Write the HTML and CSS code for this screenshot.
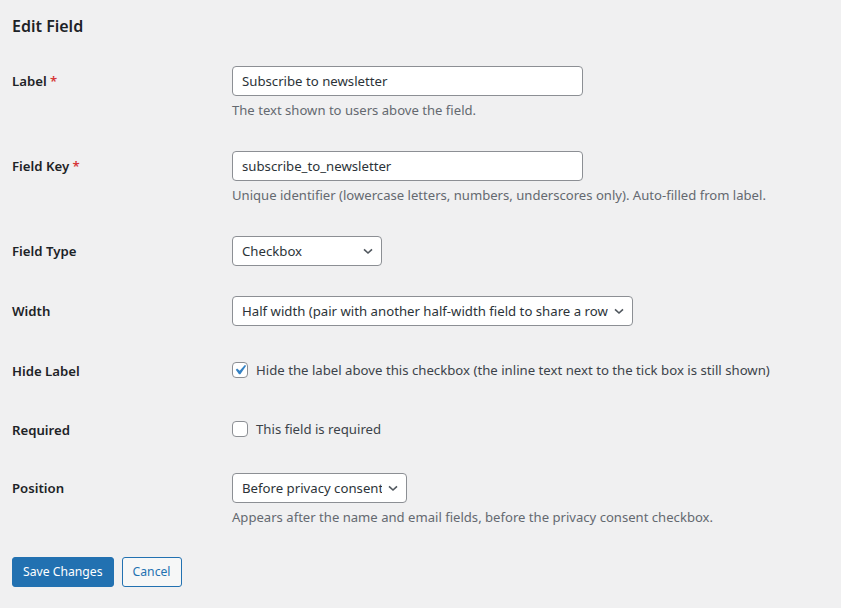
FILE: index.html
```html
<!DOCTYPE html>
<html lang="en">
<head>
  <meta charset="UTF-8">
  <title>Edit Field</title>
  <link rel="stylesheet" href="styles.css">
</head>
<body>

  <div class="wrap">
    <h2 class="title">Edit Field</h2>

    <form id="editFieldForm">
      <table class="form-table">
        <tbody>
          <!-- label + key -->
          <tr>
            <th><label for="fieldLabel">Label <span class="required">*</span></label></th>
            <td>
              <input id="fieldLabel" class="regular-text" type="text" value="Subscribe to newsletter">
              <p class="description">The text shown to users above the field.</p>
            </td>
          </tr>
          <tr>
            <th><label for="fieldKey">Field Key <span class="required">*</span></label></th>
            <td>
              <input id="fieldKey" class="regular-text" type="text" value="subscribe_to_newsletter">
              <p class="description">Unique identifier (lowercase letters, numbers, underscores only). Auto-filled from label.</p>
            </td>
          </tr>

          <!-- selects -->
          <tr>
            <th><label for="fieldType">Field Type</label></th>
            <td>
              <span class="select-wrap">
                <select id="fieldType" class="select-type">
                  <option>Checkbox</option>
                  <option>Text</option>
                  <option>Textarea</option>
                  <option>Dropdown</option>
                </select>
                <svg class="chevron" viewBox="0 0 16 16"><path d="M4 6.3l4 3.7 4-3.7"/></svg>
              </span>
            </td>
          </tr>
          <tr>
            <th><label for="fieldWidth">Width</label></th>
            <td>
              <span class="select-wrap">
                <select id="fieldWidth" class="select-width">
                  <option>Half width (pair with another half-width field to share a row)</option>
                  <option>Full width</option>
                </select>
                <svg class="chevron" viewBox="0 0 16 16"><path d="M4 6.3l4 3.7 4-3.7"/></svg>
              </span>
            </td>
          </tr>

          <!-- checkboxes -->
          <tr>
            <th>Hide Label</th>
            <td class="check-cell">
              <label class="check">
                <span class="box">
                  <input type="checkbox" name="hideLabel" checked>
                  <svg class="tick" viewBox="0 0 20 20"><path d="M14.83 4.89l1.34.94-5.81 8.38H9.02L5.78 9.67l1.34-1.25 2.57 2.4z"/></svg>
                </span>
                Hide the label above this checkbox (the inline text next to the tick box is still shown)
              </label>
            </td>
          </tr>
          <tr>
            <th>Required</th>
            <td class="check-cell">
              <label class="check">
                <span class="box">
                  <input type="checkbox" name="required">
                </span>
                This field is required
              </label>
            </td>
          </tr>

          <tr>
            <th><label for="fieldPosition">Position</label></th>
            <td>
              <span class="select-wrap">
                <select id="fieldPosition" class="select-position">
                  <option>Before privacy consent</option>
                  <option>After privacy consent</option>
                </select>
                <svg class="chevron" viewBox="0 0 16 16"><path d="M4 6.3l4 3.7 4-3.7"/></svg>
              </span>
              <p class="description">Appears after the name and email fields, before the privacy consent checkbox.</p>
            </td>
          </tr>
        </tbody>
      </table>

      <p class="submit">
        <button type="submit" class="button button-primary">Save Changes</button>
        <a href="#" class="button">Cancel</a>
      </p>
    </form>
  </div>

</body>
</html>
```

FILE: styles.css
```css
body { margin: 0; background: #f0f0f1; color: #3c434a; font-family: "Noto Sans", sans-serif; font-size: 13px; line-height: 1.4; }
.wrap { padding: 15px 12px 0; }
.title { font-size: 16px; font-weight: 600; line-height: 22px; margin: 0 0 14px; color: #1d2327; }

/* form table */
.form-table { border-collapse: collapse; width: 100%; }
.form-table th { width: 200px; padding: 21px 10px 19.5px 0; text-align: left; vertical-align: top; font-size: 13.2px; font-weight: 600; line-height: 18px; color: #1d2327; }
.form-table td { padding: 15px 10px; vertical-align: top; font-size: 13.2px; line-height: 18px; }
.required { color: #d63638; }

input[type="text"], select { box-sizing: border-box; height: 30px; border: 1px solid #8c8f94; border-radius: 4px; background: #fff; color: #2c3338; font-family: inherit; font-size: 13.2px; margin: 0; }
.regular-text { width: 351px; padding: 0 9px; }
.form-table .description { margin: 4px 0 0; font-size: 13.1px; line-height: 21px; color: #646970; }

/* selects with drawn chevron */
.select-wrap { position: relative; display: inline-block; vertical-align: top; }
select { appearance: none; -webkit-appearance: none; padding: 0 24px 0 9px; }
.select-type { width: 150px; }
.select-width { width: 401px; }
.select-position { width: 175px; }
.chevron { position: absolute; right: 6px; top: 7px; width: 16px; height: 16px; fill: none; stroke: #50575e; stroke-width: 1.6; pointer-events: none; }

/* checkboxes */
.form-table td.check-cell { padding-top: 20px; padding-bottom: 20px; }
.check { display: flex; align-items: center; gap: 8px; color: #3c434a; }
.box { position: relative; width: 16px; height: 16px; flex: none; }
.box input { appearance: none; -webkit-appearance: none; box-sizing: border-box; width: 16px; height: 16px; margin: 0; border: 1px solid #8c8f94; border-radius: 4px; background: #fff; display: block; }
.tick { position: absolute; left: -2px; top: -2px; width: 20px; height: 20px; fill: #3582c4; pointer-events: none; }

/* buttons */
.submit { margin: 14px 0 0; display: flex; gap: 8px; }
.button { box-sizing: border-box; display: inline-block; height: 30px; padding: 0 10px; border: 1px solid #2271b1; border-radius: 3px; background: #f6f7f7; color: #2271b1; font-family: inherit; font-size: 12.2px; line-height: 28px; text-decoration: none; cursor: pointer; }
.button-primary { background: #2271b1; color: #fff; }
```
